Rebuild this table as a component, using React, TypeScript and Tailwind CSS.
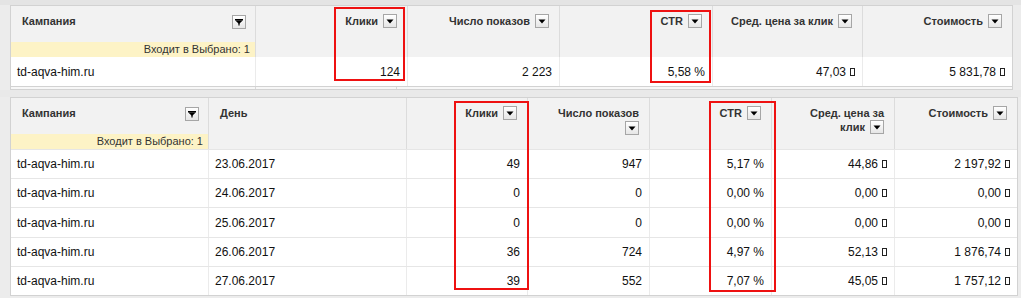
import React from "react";

const SortBtn = ({ filter = false }: { filter?: boolean }) => (
  <span className="inline-block align-top w-[14px] h-[14px] border border-[#a6a6a6] bg-gradient-to-b from-white to-[#e6e6e6]">
    <svg width="12" height="12" viewBox="0 0 12 12" className="block">
      {filter ? (
        <>
          <rect x="2" y="3" width="8" height="1.2" fill="#000" />
          <polygon points="2,4.2 10,4.2 6,8" fill="#000" />
          <rect x="5.4" y="7" width="1.2" height="2.5" fill="#000" />
        </>
      ) : (
        <polygon points="2.5,4.5 9.5,4.5 6,8.5" fill="#000" />
      )}
    </svg>
  </span>
);

const Rub = () => (
  <span
    aria-label="₽"
    className="inline-block w-[5px] h-[8px] border border-[#222] ml-[4px] align-[-0px]"
  />
);

const HeadR = ({ children }: { children: React.ReactNode }) => (
  <div className="bg-[#f2f2f2] border-r border-[#dcdcdc] pt-[8px] pr-[10px] pl-[6px] text-right text-[11px] leading-[14px] font-bold text-[#333]">
    {children}
  </div>
);

const CampaignHead = () => (
  <div className="bg-[#f2f2f2] border-r border-[#dcdcdc] flex flex-col">
    <div className="flex-1 flex justify-between items-start pt-[8px] pl-[11px] pr-[9px] text-[11px] leading-[14px] font-bold text-[#333]">
      <span>Кампания</span>
      <span className="mt-[1px]">
        <SortBtn filter />
      </span>
    </div>
    <div className="h-[15px] bg-[#fdf3c6] text-right pr-[5px] text-[11px] leading-[15px] text-[#333]">
      Входит в Выбрано: 1
    </div>
  </div>
);

const Cell = ({
  children,
  left = false,
  last = false,
}: {
  children: React.ReactNode;
  left?: boolean;
  last?: boolean;
}) => (
  <div
    className={
      "flex items-center text-[12px] text-[#111] " +
      (left ? "justify-start pl-[6px] " : "justify-end pr-[7px] ") +
      (last ? "" : "border-r border-[#ebebeb]")
    }
  >
    {children}
  </div>
);

const rows = [
  ["23.06.2017", "49", "947", "5,17 %", "44,86", "2 197,92"],
  ["24.06.2017", "0", "0", "0,00 %", "0,00", "0,00"],
  ["25.06.2017", "0", "0", "0,00 %", "0,00", "0,00"],
  ["26.06.2017", "36", "724", "4,97 %", "52,13", "1 876,74"],
  ["27.06.2017", "39", "552", "7,07 %", "45,05", "1 757,12"],
];
const rowH = ["h-[29px]", "h-[29px]", "h-[30px]", "h-[29px]", "h-[29px]"];

export default function App() {
  return (
    <div className="relative w-[1021px] h-[298px] overflow-hidden bg-[#ececec] font-['Liberation_Sans',Arial,sans-serif]">
      <div className="h-[5px] bg-[#e4e4e4]" />
      {/* top table */}
      <div className="ml-[10px] w-[1003px] border border-[#d2d2d2] bg-white">
        <div className="grid grid-cols-[245px_152px_152px_153px_150px_149px] h-[51px]">
          <CampaignHead />
          <HeadR>
            Клики<span className="ml-[5px]"><SortBtn /></span>
          </HeadR>
          <HeadR>
            Число показов<span className="ml-[5px]"><SortBtn /></span>
          </HeadR>
          <HeadR>
            CTR<span className="ml-[5px]"><SortBtn /></span>
          </HeadR>
          <HeadR>
            Сред. цена за клик<span className="ml-[5px]"><SortBtn /></span>
          </HeadR>
          <div className="bg-[#f2f2f2] pt-[8px] pr-[10px] text-right text-[11px] leading-[14px] font-bold text-[#333]">
            Стоимость<span className="ml-[5px]"><SortBtn /></span>
          </div>
        </div>
        <div className="grid grid-cols-[245px_152px_152px_153px_150px_149px] h-[29px]">
          <Cell left>td-aqva-him.ru</Cell>
          <Cell>124</Cell>
          <Cell>2 223</Cell>
          <Cell>5,58 %</Cell>
          <Cell>
            47,03<Rub />
          </Cell>
          <Cell last>
            5 831,78<Rub />
          </Cell>
        </div>
      </div>
      {/* splitter strip */}
      <div className="h-[10px] flex flex-col">
        <div className="ml-[10px] w-[1003px] h-[3px] bg-[#f7f7f7] border-x border-b border-[#d2d2d2] flex">
          <div className="w-[245px] border-r border-[#d8d8d8]" />
          <div className="w-[141px] border-r border-[#d8d8d8]" />
        </div>
        <div className="flex-1 bg-[#e9e9e9]" />
      </div>
      {/* second table */}
      <div className="ml-[10px] w-[1008px] border border-[#d2d2d2] bg-white">
        <div className="grid grid-cols-[198px_198px_121px_122px_122px_123px_122px] h-[51px]">
          <CampaignHead />
          <div className="bg-[#f2f2f2] border-r border-[#dcdcdc] pt-[8px] pl-[11px] text-[11px] leading-[14px] font-bold text-[#333]">
            День
          </div>
          <HeadR>
            Клики<span className="ml-[5px]"><SortBtn /></span>
          </HeadR>
          <HeadR>
            Число показов
            <br />
            <span className="inline-block mt-[1px]"><SortBtn /></span>
          </HeadR>
          <HeadR>
            CTR<span className="ml-[5px]"><SortBtn /></span>
          </HeadR>
          <HeadR>
            Сред. цена за
            <br />
            клик<span className="ml-[5px]"><SortBtn /></span>
          </HeadR>
          <div className="bg-[#f2f2f2] pt-[8px] pr-[10px] text-right text-[11px] leading-[14px] font-bold text-[#333]">
            Стоимость<span className="ml-[5px]"><SortBtn /></span>
          </div>
        </div>
        {rows.map((r, i) => (
          <div
            key={i}
            className={
              "grid grid-cols-[198px_198px_121px_122px_122px_123px_122px] border-t border-[#e6e6e6] " +
              rowH[i]
            }
          >
            <Cell left>td-aqva-him.ru</Cell>
            <Cell left>{r[0]}</Cell>
            <Cell>{r[1]}</Cell>
            <Cell>{r[2]}</Cell>
            <Cell>{r[3]}</Cell>
            <Cell>
              {r[4]}
              <Rub />
            </Cell>
            <Cell last>
              {r[5]}
              <Rub />
            </Cell>
          </div>
        ))}
      </div>
      {/* red annotation boxes */}
      <div className="absolute left-[334px] top-[7px] w-[71px] h-[74px] border-2 border-[#ee1111]" />
      <div className="absolute left-[650px] top-[10px] w-[61px] h-[73px] border-2 border-[#ee1111]" />
      <div className="absolute left-[454px] top-[101px] w-[75px] h-[189px] border-2 border-[#ee1111]" />
      <div className="absolute left-[709px] top-[101px] w-[67px] h-[191px] border-2 border-[#ee1111]" />
    </div>
  );
}
